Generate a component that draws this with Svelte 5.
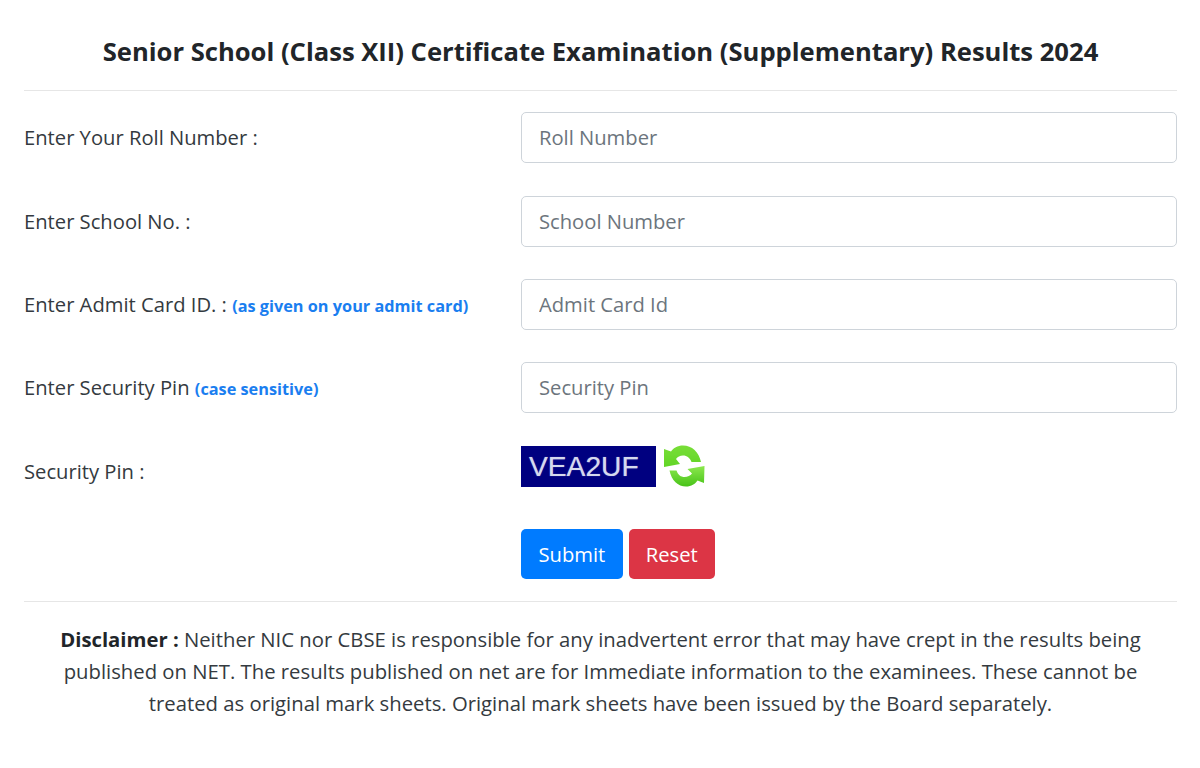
<script>
  const fields = [
    { label: 'Enter Your Roll Number :', placeholder: 'Roll Number' },
    { label: 'Enter School No. :', placeholder: 'School Number' },
    { label: 'Enter Admit Card ID. :', note: '(as given on your admit card)', placeholder: 'Admit Card Id' },
    { label: 'Enter Security Pin', note: '(case sensitive)', placeholder: 'Security Pin' }
  ];
</script>

<main class="page">
  <h1>Senior School (Class XII) Certificate Examination (Supplementary) Results 2024</h1>
  <hr />
  <form class="form" onsubmit={(e) => e.preventDefault()}>
    {#each fields as f}
      <div class="row">
        <label for={f.placeholder}>{f.label}{#if f.note}{' '}<small>{f.note}</small>{/if}</label>
        <input id={f.placeholder} type="text" placeholder={f.placeholder} />
      </div>
    {/each}
    <div class="row">
      <span class="lab">Security Pin :</span>
      <div class="captcha">
        <span class="code">VEA2UF</span>
        <svg class="refresh" width="44" height="44" viewBox="0 0 44 44" aria-label="Refresh" role="img">
          <defs>
            <linearGradient id="gr" x1="0" y1="0" x2="0" y2="1">
              <stop offset="0" stop-color="#78de38" />
              <stop offset="1" stop-color="#62d526" />
            </linearGradient>
            <linearGradient id="gb" x1="0" y1="0" x2="0" y2="1">
              <stop offset="0" stop-color="#8ce84e" />
              <stop offset="1" stop-color="#48c318" />
            </linearGradient>
            <filter id="soft"><feGaussianBlur stdDeviation="0.5" /></filter>
          </defs>
          <g filter="url(#soft)">
            <path d="M39 18C37 8 30 1.500 21 1.500C15.500 1.500 11.500 4 9 7.500L2 5L2 23L18 20L14 15C15.500 13 18 11.500 21 11.500C25 11.500 28 14 29.500 18Z" fill="url(#gr)" />
            <path d="M7.500 26.500C9.500 36.500 16 42.500 24 42.500C29.500 42.500 33 40 35.500 36.500L42 39L42.500 22L25.500 25L30 29.500C28.500 31.500 25.500 33 22.500 33C19 33 16 31 14.500 26.500Z" fill="url(#gb)" />
          </g>
        </svg>
      </div>
    </div>
    <div class="row last">
      <span></span>
      <div class="btns">
        <button type="submit" class="btn blue">Submit</button>
        <button type="reset" class="btn red">Reset</button>
      </div>
    </div>
  </form>
  <hr />
  <p class="disc"><b>Disclaimer :</b> Neither NIC nor CBSE is responsible for any inadvertent error that may have crept in the results being published on NET. The results published on net are for Immediate information to the examinees. These cannot be treated as original mark sheets. Original mark sheets have been issued by the Board separately.</p>
</main>

<style>
  :global(body) { margin: 0; background: #fff; }
  .page {
    padding: 0 23px 0 24px;
    color: #343a40;
    font-family: "Open Sans", "Noto Sans", sans-serif;
    font-size: 20.2px;
    height: 768px;
    box-sizing: border-box;
    overflow: hidden;
  }
  h1 {
    margin: 0;
    padding-top: 35px;
    height: 90px;
    box-sizing: border-box;
    font-size: 25.6px;
    line-height: 33px;
    font-weight: 700;
    text-align: center;
    color: #212529;
    white-space: nowrap;
  }
  hr { margin: 0; border: 0; border-top: 1px solid #e6e6e6; }
  .form { padding-top: 21.2px; }
  .row {
    display: grid;
    grid-template-columns: 497px 1fr;
    align-items: center;
    min-height: 51px;
    margin-bottom: 32.4px;
  }
  .row.last { margin-bottom: 21px; }
  label, .lab { white-space: nowrap; padding-bottom: 1px; }
  small { font-size: 16.3px; font-weight: 700; color: #1a7ef0; }
  input {
    box-sizing: border-box;
    width: 100%;
    height: 51px;
    padding: 0 17px 1px;
    border: 1px solid #ced4da;
    border-radius: 5px;
    font: inherit;
    color: #495057;
    background: #fff;
  }
  input::placeholder { color: #6c757d; opacity: 1; }
  .captcha { display: flex; align-items: center; gap: 6px; margin-top: -10px; }
  .code {
    width: 135px;
    height: 41px;
    box-sizing: border-box;
    padding: 0 8px;
    background: #000080;
    color: #d5d9ee;
    font-family: "Liberation Sans", Arial, sans-serif;
    font-size: 28.2px;
    line-height: 40px;
    text-shadow: 0 0 1px rgba(220, 225, 245, 0.6);
  }
  .btns { display: flex; gap: 6px; align-self: start; }
  .btn {
    height: 50px;
    padding: 0 17.5px 1px;
    border: 0;
    border-radius: 5px;
    font: inherit;
    color: #fff;
  }
  .blue { background: #007bff; }
  .red { background: #dc3545; padding: 0 17px 1px; }
  .disc {
    margin: 21px 0 0;
    padding: 0 10px;
    font-size: 20.3px;
    text-align: center;
    line-height: 32px;
    color: #343a40;
  }
  .disc b { color: #212529; }
</style>
